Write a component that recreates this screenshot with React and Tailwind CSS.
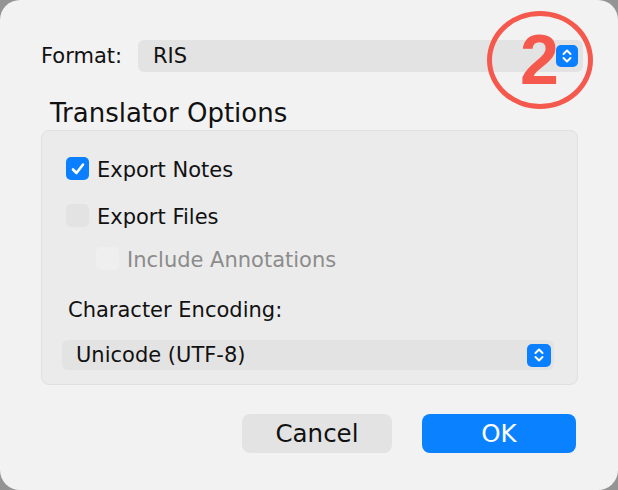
import React from "react";

function Stepper({ size = "w-[22px] h-[22px]" }) {
  return (
    <div className={`${size} rounded-[5px] bg-[#0a7fff] grid place-items-center`}>
      <svg width="12" height="16" viewBox="0 0 12 16" fill="none" stroke="white" strokeWidth="2" strokeLinecap="round" strokeLinejoin="round">
        <path d="M2.5 6 L6 2.5 L9.5 6" />
        <path d="M2.5 10 L6 13.5 L9.5 10" />
      </svg>
    </div>
  );
}

function Check({ state, label }) {
  return (
    <div className="flex items-center gap-[8px] h-[23px]">
      {state === "on" ? (
        <div className="w-[23px] h-[23px] rounded-[5px] bg-[#0a7fff] grid place-items-center">
          <svg width="16" height="16" viewBox="0 0 16 16" fill="none" stroke="white" strokeWidth="2.6" strokeLinecap="round" strokeLinejoin="round">
            <path d="M3 8.5 L6.5 12 L13 3.5" />
          </svg>
        </div>
      ) : state === "off" ? (
        <div className="w-[23px] h-[23px] rounded-[5px] bg-[#e3e3e3]" />
      ) : (
        <div className="w-[23px] h-[23px] rounded-[5px] bg-[#efefef]" />
      )}
      <span className={`pt-[3px] ${state === "dim" ? "text-[#8c8c8c]" : "text-[#111]"}`}>{label}</span>
    </div>
  );
}

export default function App() {
  return (
    <div className="w-[618px] h-[490px] bg-[#949494] font-['DejaVu_Sans',sans-serif] text-[21px] leading-[24px]">
      <div className="relative w-full h-full rounded-[20px] bg-[#f2f2f2] pt-[40px] pl-[41px]">
        {/* format row */}
        <div className="flex items-center h-[32px]">
          <span className="text-[#111] w-[97px]">Format:</span>
          <div className="w-[445px] h-[32px] rounded-[6px] bg-[#e3e3e3] flex items-center justify-between pl-[15px] pr-[5px]">
            <span className="text-[#111]">RIS</span>
            <Stepper />
          </div>
        </div>

        <div className="mt-[26px] ml-[9px] text-[26px] leading-[30px] text-[#111]">Translator Options</div>

        <div className="mt-[2px] w-[537px] h-[255px] rounded-[8px] bg-[#ebebeb] border border-[#e0e0e0] pl-[24px] pt-[26px]">
          <Check state="on" label="Export Notes" />
          <div className="mt-[24px]">
            <Check state="off" label="Export Files" />
          </div>
          <div className="mt-[20px] ml-[30px]">
            <Check state="dim" label="Include Annotations" />
          </div>
          <div className="mt-[28px] ml-[2px] text-[#111]">Character Encoding:</div>
          <div className="mt-[18px] -ml-[4px] w-[492px] h-[30px] rounded-[6px] bg-[#e3e3e3] flex items-center justify-between pl-[14px] pr-[3px]">
            <span className="text-[#111]">Unicode (UTF-8)</span>
            <Stepper size="w-[24px] h-[23px]" />
          </div>
        </div>

        <div className="mt-[29px] flex justify-end gap-[30px] pr-[42px] text-[24.5px]">
          <button className="w-[150px] h-[39px] rounded-[8px] bg-[#e3e3e3] text-[#111]">Cancel</button>
          <button className="w-[154px] h-[39px] rounded-[8px] bg-[#0a82ff] text-white">OK</button>
        </div>

        {/* annotation */}
        <div className="absolute left-[487px] top-[11px] w-[106px] h-[98px] rounded-[50%] border-[5px] border-[#f5594d]" />
        <div className="absolute left-[520px] top-[24px] text-[#f5594d] font-['Liberation_Sans',sans-serif] font-bold text-[70px] leading-[72px]">2</div>
      </div>
    </div>
  );
}
